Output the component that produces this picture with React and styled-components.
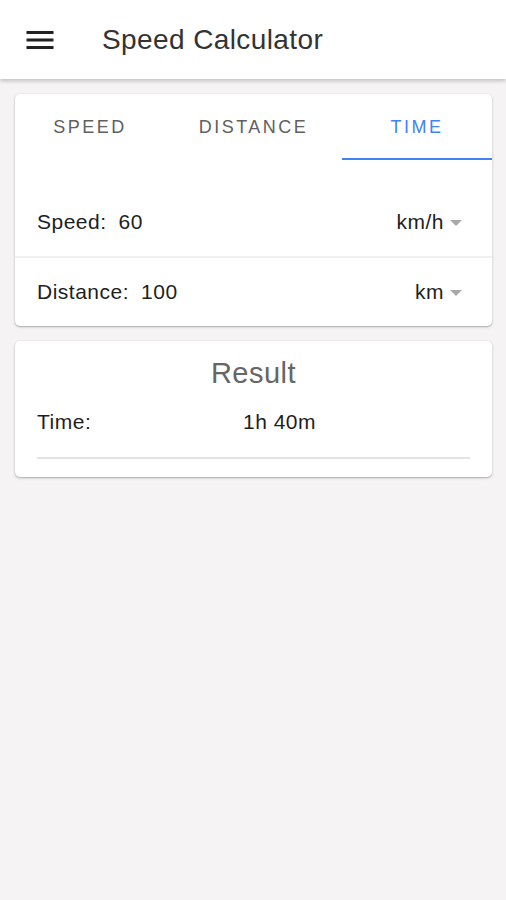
import React, { useState } from "react";
import styled, { createGlobalStyle } from "styled-components";

const GlobalStyle = createGlobalStyle`
  body {
    margin: 0;
    background: #f5f3f4;
    font-family: "Liberation Sans", Arial, sans-serif;
    color: #1e1e1e;
  }
`;

// header bar
const AppBar = styled.header`
  height: 79px;
  background: #fff;
  display: flex;
  align-items: center;
  padding-left: 22px;
  box-shadow: 0 2px 4px rgba(0, 0, 0, 0.22);
  position: relative;
  z-index: 1;
`;

const Title = styled.h1`
  margin: 0 0 0 44px;
  font-size: 28px;
  line-height: 34px;
  font-weight: 400;
  color: #333;
  letter-spacing: 0.4px;
`;

const Main = styled.main`
  display: flex;
  flex-direction: column;
  gap: 15px;
  padding: 15px 14px 15px 15px;
`;

const Card = styled.section`
  background: #fff;
  border-radius: 5px;
  box-shadow: 0 1px 3px rgba(0, 0, 0, 0.22), 0 1px 1px rgba(0, 0, 0, 0.12);
  overflow: hidden;
`;

const Tabs = styled.nav`
  display: flex;
  justify-content: space-between;
  height: 66px;
`;

const Tab = styled.button`
  flex: 0 0 150px;
  border: 0;
  background: none;
  padding: 2px 0 0;
  font-family: inherit;
  font-size: 18px;
  letter-spacing: 2.5px;
  text-transform: uppercase;
  color: ${(p) => (p.$active ? "#3f84f2" : "#606060")};
  border-bottom: 2px solid ${(p) => (p.$active ? "#3f84f2" : "transparent")};
  cursor: pointer;
`;

const Form = styled.div`
  padding-top: 28px;
`;

const Row = styled.div`
  display: flex;
  align-items: center;
  height: 68px;
  padding: 0 30px 0 22px;
  font-size: 21px;
  letter-spacing: 0.5px;
  & + & {
    border-top: 2px solid #efefef;
  }
`;

const Label = styled.span`
  margin-right: 12px;
`;

const Value = styled.span`
  flex: 1;
`;

const Select = styled.span`
  display: flex;
  align-items: center;
  gap: 6px;
`;

const Caret = styled.span`
  width: 0;
  height: 0;
  border-left: 6px solid transparent;
  border-right: 6px solid transparent;
  border-top: 6px solid #a8a8a8;
  margin-top: 2px;
`;

const ResultCard = styled(Card)`
  padding: 15px 22px 18px;
`;

const ResultTitle = styled.h2`
  margin: 0;
  text-align: center;
  font-size: 29px;
  line-height: 34px;
  letter-spacing: 0.5px;
  font-weight: 400;
  color: #666;
`;

const ResultRow = styled.div`
  display: grid;
  grid-template-columns: 206px 1fr;
  font-size: 21px;
  line-height: 24px;
  letter-spacing: 0.5px;
  padding: 20px 0 23px;
  border-bottom: 2px solid #e4e4e4;
`;

const MenuIcon = () => (
  <svg width="36" height="36" viewBox="0 0 24 24" fill="#222">
    <path d="M3 18h18v-2H3v2zm0-5h18v-2H3v2zm0-7v2h18V6H3z" />
  </svg>
);

export default function App() {
  const [tab, setTab] = useState("time");
  return (
    <>
      <GlobalStyle />
      <AppBar>
        <MenuIcon />
        <Title>Speed Calculator</Title>
      </AppBar>
      <Main>
        <Card>
          <Tabs>
            {["speed", "distance", "time"].map((t) => (
              <Tab key={t} $active={tab === t} onClick={() => setTab(t)}>
                {t}
              </Tab>
            ))}
          </Tabs>
          <Form>
            <Row>
              <Label>Speed:</Label>
              <Value>60</Value>
              <Select>
                km/h <Caret />
              </Select>
            </Row>
            <Row>
              <Label>Distance:</Label>
              <Value>100</Value>
              <Select>
                km <Caret />
              </Select>
            </Row>
          </Form>
        </Card>
        <ResultCard>
          <ResultTitle>Result</ResultTitle>
          <ResultRow>
            <span>Time:</span>
            <span>1h 40m</span>
          </ResultRow>
        </ResultCard>
      </Main>
    </>
  );
}
